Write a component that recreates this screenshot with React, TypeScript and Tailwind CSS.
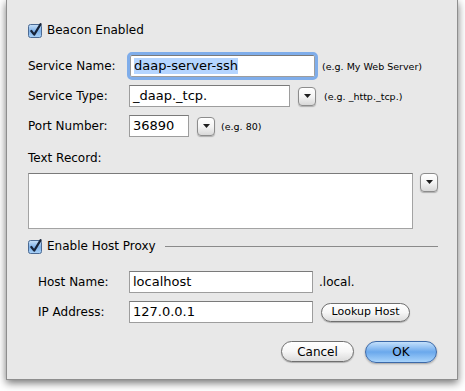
import React from 'react'

const font = { fontFamily: '"DejaVu Sans", Verdana, sans-serif' }

const Checkbox = () => (
    <svg width="15" height="15" viewBox="0 0 15 15" className="shrink-0">
        <defs>
            <linearGradient id="cb" x1="0" y1="0" x2="0" y2="1">
                <stop offset="0" stopColor="#c9e1f8" />
                <stop offset="0.5" stopColor="#7fb2ea" />
                <stop offset="1" stopColor="#a9d1f7" />
            </linearGradient>
        </defs>
        <rect x="0.5" y="1.5" width="13" height="13" rx="2" fill="url(#cb)" stroke="#4b6a93" />
        <path d="M3.3 8 L6.2 11.6 L12.6 1.2" fill="none" stroke="#17243a" strokeWidth="2.2" strokeLinecap="round" strokeLinejoin="round" />
    </svg>
)

const Popup = ({ className = '' }) => (
    <div
        className={`w-[18px] h-[19px] shrink-0 rounded-[4px] border border-[#8c8c8c] bg-gradient-to-b from-white via-[#f4f4f4] to-[#d8d8d8] shadow-[0_1px_1px_rgba(0,0,0,0.25)] flex justify-center pt-[6px] ${className}`}
    >
        <svg width="7" height="4" viewBox="0 0 7 4">
            <path d="M0 0 H7 L3.5 4 Z" fill="#1e1e1e" />
        </svg>
    </div>
)

const Field = ({ value = '', className = '', focused = false }) => (
    <div
        className={`h-[22px] bg-white flex items-center px-[3px] text-[13px] text-black border border-[#9d9d9d] border-t-[#7a7a7a] ${
            focused ? 'outline-[3px] outline outline-[#7fadea] rounded-[2px]' : ''
        } ${className}`}
    >
        {focused ? <span className="bg-[#b5d5ff] leading-[16px]">{value}</span> : <span>{value}</span>}
    </div>
)

const Hint = ({ children }) => <span className="text-[9.5px] text-black whitespace-nowrap">{children}</span>

const PillButton = ({ children, className = '' }) => (
    <div
        className={`flex items-center justify-center rounded-full border border-[#6f6f6f] bg-gradient-to-b from-white via-[#f6f6f6] to-[#dcdcdc] shadow-[0_1px_1px_rgba(0,0,0,0.25)] ${className}`}
    >
        {children}
    </div>
)

export default function App() {
    return (
        <div className="w-[465px] h-[391px] bg-white relative overflow-hidden" style={font}>
            <div className="ml-[6px] w-[452px] h-[380px] bg-[#e8e8e8] border-x border-b border-[#8e8e8e] shadow-[0_3px_8px_rgba(0,0,0,0.55)] pl-[21px] pr-[19px] pt-[22px] text-[12px] text-black">
                <div className="h-[16px] flex items-center gap-[4px]">
                    <Checkbox />
                    <span>Beacon Enabled</span>
                </div>

                <div className="mt-[13px] h-[30px] flex items-center">
                    <span className="w-[101px] shrink-0">Service Name:</span>
                    <Field value="daap-server-ssh" focused className="w-[185px] ml-[1px] h-[20px]" />
                    <span className="ml-[7px]">
                        <Hint>(e.g. My Web Server)</Hint>
                    </span>
                </div>

                <div className="h-[30px] flex items-center">
                    <span className="w-[101px] shrink-0">Service Type:</span>
                    <Field value="_daap._tcp." className="w-[161px]" />
                    <Popup className="ml-[8px]" />
                    <span className="ml-[8px]">
                        <Hint>(e.g. _http._tcp.)</Hint>
                    </span>
                </div>

                <div className="h-[30px] flex items-center">
                    <span className="w-[101px] shrink-0">Port Number:</span>
                    <Field value="36890" className="w-[60px]" />
                    <Popup className="ml-[8px]" />
                    <span className="ml-[6px]">
                        <Hint>(e.g. 80)</Hint>
                    </span>
                </div>

                <div className="mt-[9px] h-[16px] flex items-center">Text Record:</div>

                <div className="mt-[7px] flex items-start">
                    <div className="w-[386px] h-[56px] bg-white border border-[#a3a3a3] border-t-[#7a7a7a]" />
                    <Popup className="ml-[7px]" />
                </div>

                <div className="mt-[9px] h-[16px] flex items-center gap-[4px]">
                    <Checkbox />
                    <span className="whitespace-nowrap">Enable Host Proxy</span>
                    <div className="ml-[5px] flex-1 h-px bg-[#8a8a8a]" />
                </div>

                <div className="mt-[13px] h-[30px] flex items-center">
                    <span className="w-[101px] shrink-0 pl-[10px]">Host Name:</span>
                    <Field value="localhost" className="w-[184px]" />
                    <span className="ml-[6px]">.local.</span>
                </div>

                <div className="h-[30px] flex items-center">
                    <span className="w-[101px] shrink-0 pl-[10px]">IP Address:</span>
                    <Field value="127.0.0.1" className="w-[184px]" />
                    <PillButton className="ml-[8px] w-[89px] h-[19px] text-[11px]">Lookup Host</PillButton>
                </div>

                <div className="mt-[14px] flex justify-end gap-[11px] pr-[1px]">
                    <PillButton className="w-[73px] h-[21px] text-[12px]">Cancel</PillButton>
                    <div className="w-[72px] h-[22px] rounded-full border border-[#3c69a8] bg-gradient-to-b from-[#c4e0fb] via-[#6aa8ec] to-[#a7d3fb] shadow-[0_1px_2px_rgba(0,0,0,0.3)] flex items-center justify-center text-[12px]">
                        OK
                    </div>
                </div>
            </div>
        </div>
    )
}
